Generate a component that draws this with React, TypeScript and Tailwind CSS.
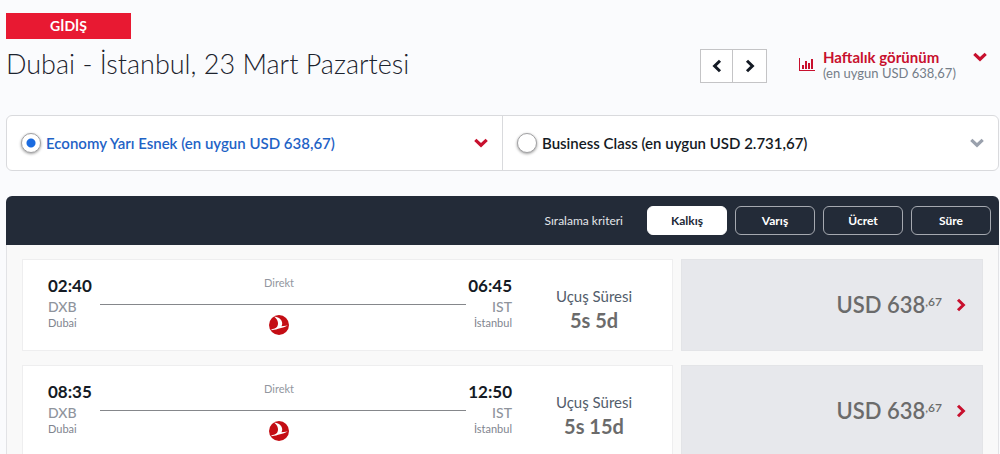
import { useState } from "react";
import clsx from "clsx";

interface Flight {
  departure: string;
  arrival: string;
  duration: string;
  price: string;
  cents: string;
}

const flights: Flight[] = [
  { departure: "02:40", arrival: "06:45", duration: "5s 5d", price: "USD 638", cents: ",67" },
  { departure: "08:35", arrival: "12:50", duration: "5s 15d", price: "USD 638", cents: ",67" },
];

const cabins = [
  { id: "economy", label: "Economy Yarı Esnek (en uygun USD 638,67)" },
  { id: "business", label: "Business Class (en uygun USD 2.731,67)" },
];

const sortOptions = ["Kalkış", "Varış", "Ücret", "Süre"];

function ChevronDown({ className }: { className?: string }) {
  return (
    <svg viewBox="0 0 14 10" className={clsx("w-[14px] h-[10px] shrink-0", className)} fill="none" stroke="currentColor" strokeWidth="3.2">
      <path d="M1.3 1.8 L7 7.2 L12.7 1.8" />
    </svg>
  );
}

function ChevronRight({ className }: { className?: string }) {
  return (
    <svg viewBox="0 0 10 14" className={clsx("w-[10px] h-[14px] shrink-0", className)} fill="none" stroke="currentColor" strokeWidth="3">
      <path d="M2 1.7 L7.4 7 L2 12.3" />
    </svg>
  );
}

function ChartIcon() {
  return (
    <svg viewBox="0 0 16 13" className="w-4 h-[13px] shrink-0" fill="#c8102e">
      <path d="M0 0h1v12h15v1H0z" />
      <path d="M3 7h2v4H3zM6 3h2v8H6zM9 5h2v6H9zM12 1h2v10h-2z" />
    </svg>
  );
}

function AirlineLogo() {
  return (
    <svg viewBox="0 0 20 20" className="size-5" role="img" aria-label="Turkish Airlines">
      <circle cx="10" cy="10" r="10" fill="#c40d14" />
      <path
        d="M5 1.6C9.500 2 12.900 4.600 13.200 8c.1 1.300-.2 2.300-.7 3.200l6.300-.8c-2.600 1.300-5.200 2.100-7.700 2.900-2.700.9-5.200 1.500-8.400 2l-.5-.9c2.500-.5 4.700-1.300 5.900-2.700C10 9 9 4.700 5 1.600z"
        fill="#fff"
      />
    </svg>
  );
}

function FlightRow({ flight }: { flight: Flight }) {
  return (
    <li className="flex gap-2">
      <div className="flex-1 flex bg-white border border-[#eeeeef] h-[92px]">
        <div className="flex-1 flex pl-[25px] pt-[15px]">
          <div className="w-[52px]">
            <div className="text-[17px] leading-[22px] font-bold text-[#141a24]">{flight.departure}</div>
            <div className="text-sm leading-5 font-medium text-[#8f949c]">DXB</div>
            <div className="text-[11px] leading-3 text-[#7f858f]">Dubai</div>
          </div>
          <div className="flex-1 flex flex-col items-center">
            <span className="pr-2 text-[11px] leading-4 text-[#9297a0]">Direkt</span>
            <div className="w-full h-px mt-[13px] mb-[10px] bg-[#85878b]" />
            <div className="pr-2">
              <AirlineLogo />
            </div>
          </div>
          <div className="w-[46px] text-right">
            <div className="text-[17px] leading-[22px] font-bold text-[#141a24]">{flight.arrival}</div>
            <div className="text-sm leading-5 font-medium text-[#8f949c]">IST</div>
            <div className="text-[11px] leading-3 text-[#7f858f]">İstanbul</div>
          </div>
        </div>
        <div className="w-[160px] pt-[25px] pl-1 text-center">
          <div className="text-[15px] leading-[22px] text-[#535d6b]">Uçuş Süresi</div>
          <div className="text-xl leading-[26px] font-bold text-[#6b6b6b]">{flight.duration}</div>
        </div>
      </div>
      <button className="w-[302px] flex items-center justify-end pr-4 bg-[#e7e8ec] border border-[#e3e4e7] text-[#6b6b6b]">
        <span className="text-[22px] leading-7 font-semibold">{flight.price}</span>
        <span className="text-xs leading-4 font-semibold pb-1.5">{flight.cents}</span>
        <ChevronRight className="ml-[14px] text-[#c8102e]" />
      </button>
    </li>
  );
}

export default function App() {
  const [cabin, setCabin] = useState("economy");
  const [sort, setSort] = useState("Kalkış");

  return (
    <main className="h-screen overflow-hidden bg-[#fafbfd] pl-1.5 pr-px pt-[13px] font-['Lato','Open_Sans',sans-serif]">
      <header className="flex justify-between">
        <div>
          <div className="w-[125px] h-[26px] bg-[#e81932] text-white text-sm leading-[26px] font-bold text-center">GİDİŞ</div>
          <h1 className="mt-[7px] text-[27px] leading-9 font-light text-[#1c232e]">Dubai - İstanbul, 23 Mart Pazartesi</h1>
        </div>
        <div className="flex items-start pt-9 pr-3">
          <div className="flex border border-[#c4c4c6] bg-white divide-x divide-[#c4c4c6] text-[#141a24]">
            <button aria-label="Önceki gün" className="w-8 h-8 flex items-center justify-center">
              <ChevronRight className="rotate-180" />
            </button>
            <button aria-label="Sonraki gün" className="w-[33px] h-8 flex items-center justify-center">
              <ChevronRight />
            </button>
          </div>
          <button className="flex items-start ml-8 text-left">
            <span className="pt-[9px]">
              <ChartIcon />
            </span>
            <span className="w-[150px] ml-2">
              <span className="block text-[15px] leading-4 font-bold text-[#c8102e]">Haftalık görünüm</span>
              <span className="block text-[13px] leading-4 text-[#747d88]">(en uygun USD 638,67)</span>
            </span>
            <ChevronDown className="mt-[3px] text-[#c8102e]" />
          </button>
        </div>
      </header>

      <div className="mt-8 flex h-14 bg-white border border-[#d9dadd] rounded-md divide-x divide-[#d9dadd]">
        {cabins.map((item) => (
          <label
            key={item.id}
            className={clsx(
              "flex-1 flex items-center px-[14px] text-[15px] font-semibold cursor-pointer",
              cabin === item.id ? "text-[#1f63c6]" : "text-[#141a24]"
            )}
          >
            <input
              type="radio"
              name="cabin"
              checked={cabin === item.id}
              onChange={() => setCabin(item.id)}
              className="appearance-none size-5 mr-[5px] rounded-full border border-[#a2a2a4] shadow-[0_1px_3px_rgba(0,0,0,0.4)] bg-white checked:bg-[radial-gradient(circle,#1a6be0_4px,#fff_5px)]"
            />
            <span className="flex-1">{item.label}</span>
            <ChevronDown className={cabin === item.id ? "text-[#c8102e]" : "text-[#9aa1ad]"} />
          </label>
        ))}
      </div>

      <section className="mt-[25px]">
        <div className="flex items-center justify-end h-[49px] pr-2 gap-2 bg-[#232b38] rounded-t-md">
          <span className="mr-4 text-xs text-[#e4e6ea]">Sıralama kriteri</span>
          {sortOptions.map((option) => (
            <button
              key={option}
              onClick={() => setSort(option)}
              className={clsx(
                "w-20 h-[29px] rounded-md border text-xs font-bold",
                sort === option ? "bg-white border-white text-[#232b38]" : "border-[#a5a9b0] text-white"
              )}
            >
              {option}
            </button>
          ))}
        </div>
        <ul className="flex flex-col gap-[14px] px-[15px] py-[14px] bg-[#f9f9f9] border-x border-[#e2e3e6]">
          {flights.map((flight) => (
            <FlightRow key={flight.departure} flight={flight} />
          ))}
        </ul>
      </section>
    </main>
  );
}
